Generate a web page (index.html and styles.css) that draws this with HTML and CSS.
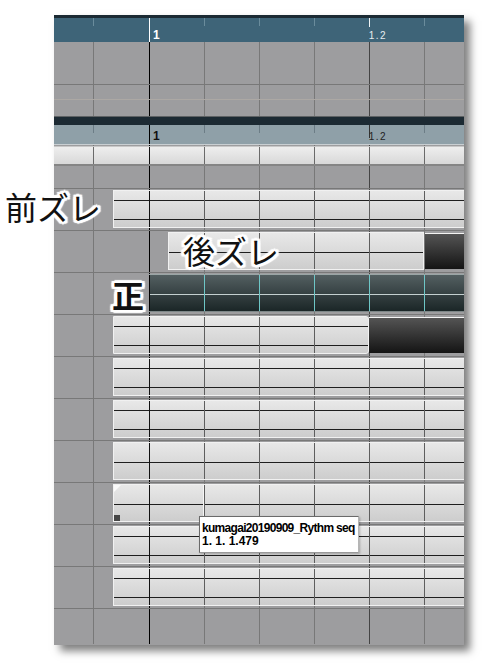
FILE: index.html
```html
<!DOCTYPE html>
<html lang="ja">
<head>
<meta charset="utf-8">
<link rel="stylesheet" href="styles.css">
</head>
<body>
<div class="frame">
  <div class="topbar"></div>
  <div class="ruler ruler-a"><span class="bar-no">1</span><span class="beat-no">1.2</span></div>
  <div class="g lane lane-a"></div>
  <div class="g lane lane-b"></div>
  <div class="g lane lane-c"></div>
  <div class="divider"></div>
  <div class="ruler ruler-b"><span class="bar-no">1</span><span class="beat-no">1.2</span></div>
  <div class="g lane lane-gap"></div>
  <div class="g strip"></div>
  <div class="g lane lane-head"></div>
  <div class="g row"><div class="g clip two indent"></div></div>
  <div class="g row"><div class="g clip mid late"></div><div class="clip dark"></div></div>
  <div class="g row"><div class="g clip teal"></div></div>
  <div class="g row"><div class="g clip two indent cut"></div><div class="clip dark"></div></div>
  <div class="g row"><div class="g clip two indent"></div></div>
  <div class="g row"><div class="g clip two indent"></div></div>
  <div class="g row"><div class="g clip mid indent"></div></div>
  <div class="g row"><div class="g clip mid indent marked"><span class="corner"></span><span class="handle"></span></div></div>
  <div class="g row"><div class="g clip two indent"></div></div>
  <div class="g row"><div class="g clip two indent"></div></div>
  <div class="g lane lane-end"></div>
</div>
<div class="label label-front">前ズレ</div>
<div class="label label-back">後ズレ</div>
<div class="label label-just">正</div>
<div class="tooltip">
  <div class="tip-name">kumagai20190909_Rythm seq</div>
  <div class="tip-pos">1. 1. 1.479</div>
</div>
</body>
</html>
```
FILE: styles.css
```css
* { box-sizing: border-box; }
html, body { margin: 0; padding: 0; background: #fff; }
body {
  width: 491px;
  height: 672px;
  overflow: hidden;
  position: relative;
  font-family: "Liberation Sans", Arial, sans-serif;
}

.frame {
  margin: 15px 0 0 54px;
  width: 410px;
  height: 630px;
  display: flex;
  flex-direction: column;
  overflow: hidden;
  background: #9d9d9f;
  box-shadow: 6px 6px 8px rgba(0, 0, 0, 0.5);
}

/* grid lines (viewport-anchored so every lane lines up) */
.g {
  --ln: #787878;
  --bar: #000;
  --bar2: #444;
  background-color: #9d9d9f;
  background-image:
    var(--x, linear-gradient(transparent, transparent)),
    linear-gradient(var(--bar), var(--bar)),
    linear-gradient(var(--bar2), var(--bar2)),
    linear-gradient(var(--ln), var(--ln)),
    repeating-linear-gradient(90deg, var(--ln) 0 1px, transparent 1px 55px),
    var(--h, linear-gradient(transparent, transparent)),
    var(--fill, linear-gradient(transparent, transparent));
  background-position: var(--xp, 0 0), 149px 0, 369px 0, 93px 0, 149px 0, 0 0, 0 0;
  background-size: 1px 100%, 1px 100%, 1px 100%, 1px 100%, 316px 100%, 100% 100%, 100% 100%;
  background-repeat: no-repeat;
  background-attachment: fixed, fixed, fixed, fixed, fixed, scroll, scroll;
}

.topbar { flex: 0 0 3px; background: #1b2a33; }
.divider { flex: 0 0 9px; background: #1c2a33; border-top: 1px solid #5e6264; }

.ruler {
  display: flex;
  align-items: baseline;
  font-weight: 700;
}
.ruler .bar-no { font-size: 12px; line-height: 12px; margin-left: 99px; }
.ruler .beat-no { font-size: 10px; line-height: 12px; font-weight: 400; letter-spacing: 1.5px; margin-left: 209px; }

.ruler-a {
  flex: 0 0 24px;
  padding-top: 11px;
  color: #fff;
  background-color: #3e6478;
  background-image:
    linear-gradient(#fff, #fff),
    linear-gradient(#f0f4f6, #f0f4f6),
    linear-gradient(#6a8c9c, #6a8c9c),
    repeating-linear-gradient(90deg, #6a8c9c 0 1px, transparent 1px 55px);
  background-position: 95px 0, 315px 0, 39px 0, 150px 0;
  background-size: 1px 100%, 1px 9px, 1px 8px, 221px 8px;
  background-repeat: no-repeat;
}
.ruler-a .beat-no { color: #e6edf0; }

.ruler-b {
  flex: 0 0 20px;
  padding-top: 5px;
  color: #111;
  background-color: #8fa0a8;
  background-image:
    linear-gradient(#000, #000),
    linear-gradient(#333, #333),
    linear-gradient(#6c7d86, #6c7d86),
    repeating-linear-gradient(90deg, #6c7d86 0 1px, transparent 1px 55px);
  background-position: 95px 0, 315px 0, 39px 0, 150px 0;
  background-size: 1px 100%, 1px 13px, 1px 8px, 221px 8px;
  background-repeat: no-repeat;
  border-bottom: 1px solid #c9cfd2;
}
.ruler-b .beat-no { color: #222; }

.lane-a { flex: 0 0 42px; }
.lane-b { flex: 0 0 15px; border-top: 1px solid #787878; }
.lane-c { flex: 0 0 17px; border-top: 1px solid #aca8a4; }
.lane-gap { flex: 0 0 1px; }
.strip {
  flex: 0 0 18px;
  --ln: #6a6a6a;
  --bar2: #6a6a6a;
  --bar: #111;
  --fill: linear-gradient(#eeeeee, #d8d8d8);
  border-top: 1px solid #c8c8c8;
}
.lane-head { flex: 0 0 24px; border-top: 2px solid #858585; }
.lane-end { flex: 0 0 36px; border-top: 1px solid #787878; }

.row {
  flex: 0 0 42px;
  display: flex;
  border-top: 1px solid #787878;
  padding: 1px 0 2px 0;
}

.clip {
  flex: 1 1 auto;
  margin-right: -2px;
  border: 1px solid #f1f1f1;
  --ln: #5e5e5e;
  --bar: #111;
  --bar2: #5e5e5e;
  --fill: linear-gradient(#e8e8e8, #cdcdcd);
}
.clip.two {
  --h: linear-gradient(to bottom, transparent 9px, #1e1e1e 9px 10px, transparent 10px 28px, #1e1e1e 28px 29px, transparent 29px);
}
.clip.mid {
  --h: linear-gradient(to bottom, transparent 19px, #1e1e1e 19px 20px, transparent 20px);
}
.indent { margin-left: 59px; }
.late { margin-left: 114px; flex: 0 0 256px; margin-right: 1px; }
.cut { flex: 0 0 256px; margin-right: 0; border-top-right-radius: 3px; border-bottom-right-radius: 3px; }

.clip.teal {
  margin-left: 95px;
  border: 0;
  border-top: 1px solid #9aa6a6;
  border-bottom: 1px solid #7d8788;
  --ln: #6ec6c6;
  --bar: #000;
  --bar2: #6ec6c6;
  --fill: linear-gradient(#535f61, #1b2627);
  --h: linear-gradient(to bottom, transparent 19px, #c4d0d0 19px 20px, transparent 20px);
}

.clip.dark {
  margin: 1px -2px 1px 0;
  border: 0;
  border-top: 1px solid #f4f4f4;
  background: linear-gradient(#545454, #141414);
}

.marked {
  display: flex;
  flex-direction: column;
  justify-content: space-between;
  --x: linear-gradient(#f6f6f6, #f6f6f6);
  --xp: 203px 0;
}
.corner {
  width: 0;
  height: 0;
  border-top: 7px solid #fafafa;
  border-right: 7px solid transparent;
}
.handle {
  width: 6px;
  height: 6px;
  margin-bottom: 0;
  background: #464646;
}

.label {
  position: absolute;
  font-family: "Noto Sans CJK JP", "Noto Sans", sans-serif;
  font-size: 32px;
  line-height: 32px;
  color: #111;
  white-space: nowrap;
  text-shadow:
    2px 0 0 #fff, -2px 0 0 #fff, 0 2px 0 #fff, 0 -2px 0 #fff,
    2px 2px 0 #fff, -2px 2px 0 #fff, 2px -2px 0 #fff, -2px -2px 0 #fff,
    3px 0 1px #fff, -3px 0 1px #fff, 0 3px 1px #fff, 0 -3px 1px #fff,
    3px 2px 1px #fff, -3px 2px 1px #fff, 3px -2px 1px #fff, -3px -2px 1px #fff;
}
.label-front { left: 5px; top: 190px; }
.label-back { left: 183px; top: 234px; }
.label-just { left: 112px; top: 278px; font-weight: 700; }

.tooltip {
  position: absolute;
  left: 199px;
  top: 516px;
  width: 160px;
  height: 37px;
  background: #fff;
  border: 1px solid #6a6a6a;
  border-right-color: #b5b5b5;
  border-bottom-color: #9a9a9a;
  box-shadow: 1px 1px 2px rgba(0, 0, 0, 0.25);
  padding: 5px 0 0 2px;
  font-family: "Liberation Sans", Arial, sans-serif;
  font-weight: 700;
  font-size: 12px;
  line-height: 13px;
  color: #000;
  white-space: nowrap;
}
.tip-name { letter-spacing: -0.7px; }
```
